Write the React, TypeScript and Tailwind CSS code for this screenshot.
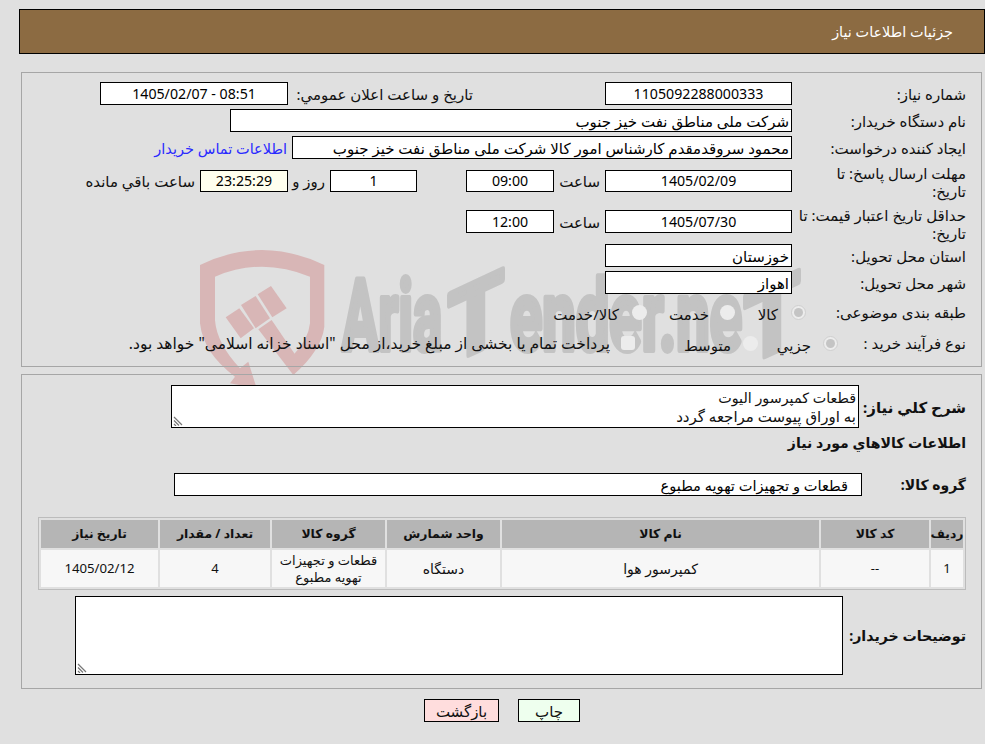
import React from "react";

const Field = ({ w, h = "h-[23px]", center, num, bg = "bg-white", pr = "pr-[2px]", size = "", children }: { w: string; h?: string; center?: boolean; num?: boolean; bg?: string; pr?: string; size?: string; children?: React.ReactNode }) => (
  <div className={`${w} ${h} ${bg} ${center ? "justify-center" : pr} ${num ? "text-[14.2px]" : size} flex shrink-0 items-center whitespace-nowrap border border-black text-black`}>{children}</div>
);

const Radio = ({ on }: { on?: boolean }) => (
  <span className={`flex h-[15px] w-[15px] shrink-0 items-center justify-center rounded-full ${on ? "border border-[#cfcfcf] bg-[#ececec]" : "bg-[#ececec]"}`}>
    {on && <span className="h-[9px] w-[9px] rounded-full bg-[#c4c4c4]" />}
  </span>
);

const Opt = ({ w, gap, on, label }: { w: string; gap: string; on?: boolean; label: string }) => (
  <div className={`${w} flex shrink-0 items-center`}>
    <Radio on={on} />
    <span className={`${gap} mt-[3px] whitespace-nowrap`}>{label}</span>
  </div>
);

const Watermark = () => (
  <svg className="absolute left-[190px] top-[240px] [direction:ltr]" width="640" height="150" viewBox="190 240 640 150">
    <g transform="translate(190 240) scale(0.3333)" fill="#d8b6b6">
      <path d="M30 75 Q215 -15 403 75 L403 260 Q395 330 310 405 L310 345 Q355 300 360 250 L360 110 Q215 50 75 110 L75 240 Q80 310 150 385 L175 365 L200 445 L120 430 L135 410 Q40 340 30 250 Z" />
      <polygon points="107,232 148,205 192,265 152,295" />
      <polygon points="153,195 197,168 240,235 197,265" />
      <polygon points="203,163 243,138 290,205 247,232" />
      <polygon points="205,268 245,240 330,365 310,405" />
    </g>
    <g fill="#c3c3c3" stroke="#c3c3c3" strokeWidth="6" strokeLinejoin="round" fontFamily="Roboto" fontWeight="700" fontSize="98">
      <text x="342" y="350" textLength="100" lengthAdjust="spacingAndGlyphs">Aria</text>
      <text x="448" y="350" textLength="56" lengthAdjust="spacingAndGlyphs" transform="translate(0 223.5) skewY(-25)">T</text>
      <text x="510" y="350" textLength="232" lengthAdjust="spacingAndGlyphs">ender.ne</text>
      <text x="744" y="350" textLength="56" lengthAdjust="spacingAndGlyphs" transform="translate(0 363) skewY(-25)">T</text>
    </g>
  </svg>
);

const Cell = ({ head, size = "text-[14px]", children }: { head?: boolean; size?: string; children: React.ReactNode }) => (
  <div className={`flex items-center justify-center whitespace-nowrap text-center ${head ? "h-[28px] bg-[#b5b5b5] text-[12.4px] font-bold" : `h-[37px] bg-[#f7f7f7] leading-[17px] ${size}`}`}>{children}</div>
);

const Resize = () => (
  <svg className="absolute bottom-[1px] left-[1px]" width="10" height="10" viewBox="0 0 10 10" stroke="#777" strokeWidth="1.2" fill="none">
    <path d="M1 1 L9 9 M1 4.5 L6 9.5 M1 8 L3 10" />
  </svg>
);

export default function App() {
  return (
    <div dir="rtl" className="relative h-[744px] w-[985px] overflow-hidden bg-[#e0e0e0] pt-[9px] font-['Noto_Sans','DejaVu_Sans',sans-serif] text-[15px] leading-[18px] text-[#111]">
      <Watermark />
      <div className="relative">
        <div className="flex h-[45px] w-[966px] items-center border border-black bg-[#8c6b42] pr-[31px] text-[14.4px] text-white">جزئیات اطلاعات نیاز</div>

        <div className="mr-[3px] mt-[18px] w-[961px] border border-[#a6a6a6] pb-[13px] pr-[15px] pt-[9px]">
          <div className="flex items-center">
            <div className="w-[174px] shrink-0">شماره نیاز:</div>
            <Field w="w-[187px]" center num>1105092288000333</Field>
            <div className="mr-[132px] w-[185px] shrink-0">تاریخ و ساعت اعلان عمومي:</div>
            <Field w="w-[188px]" center num>08:51 - 1405/02/07</Field>
          </div>
          <div className="mt-[4px] flex items-center">
            <div className="w-[174px] shrink-0">نام دستگاه خریدار:</div>
            <Field w="w-[562px]">شرکت ملی مناطق نفت خیز جنوب</Field>
          </div>
          <div className="mt-[4px] flex items-center">
            <div className="w-[174px] shrink-0">ایجاد کننده درخواست:</div>
            <Field w="w-[500px]">محمود سروقدمقدم کارشناس امور کالا شرکت ملی مناطق نفت خیز جنوب</Field>
            <a className="mr-[5px] whitespace-nowrap text-[14.5px] text-[#2a2aff]">اطلاعات تماس خریدار</a>
          </div>
          <div className="mt-[5px] flex h-[38px] items-start">
            <div className="w-[174px] shrink-0">مهلت ارسال پاسخ: تا<br />تاریخ:</div>
            <div className="mt-[6px] flex items-center">
              <Field w="w-[187px]" h="h-[22px]" center num>1405/02/09</Field>
              <div className="w-[51px] shrink-0 pr-[5px]">ساعت</div>
              <Field w="w-[88px]" h="h-[22px]" center num>09:00</Field>
              <div className="w-[49px] shrink-0" />
              <Field w="w-[87px]" h="h-[22px]" center num>1</Field>
              <div className="w-[42px] shrink-0 pr-[5px]">روز و</div>
              <Field w="w-[88px]" h="h-[22px]" center num bg="bg-[#ffffee]">23:25:29</Field>
              <div className="mr-[5px] whitespace-nowrap">ساعت باقي مانده</div>
            </div>
          </div>
          <div className="mt-[4px] flex h-[36px] items-start">
            <div className="w-[174px] shrink-0 whitespace-nowrap">حداقل تاریخ اعتبار قیمت: تا<br />تاریخ:</div>
            <div className="mt-[4px] flex items-center">
              <Field w="w-[187px]" center num>1405/07/30</Field>
              <div className="w-[51px] shrink-0 pr-[5px]">ساعت</div>
              <Field w="w-[88px]" center num>12:00</Field>
            </div>
          </div>
          <div className="mt-[2px] flex items-center">
            <div className="w-[174px] shrink-0">استان محل تحویل:</div>
            <Field w="w-[187px]">خوزستان</Field>
          </div>
          <div className="mt-[4px] flex items-center">
            <div className="w-[174px] shrink-0">شهر محل تحویل:</div>
            <Field w="w-[187px]">اهواز</Field>
          </div>
          <div className="mt-[8px] flex h-[20px] items-center">
            <div className="w-[160px] shrink-0">طبقه بندی موضوعی:</div>
            <Opt w="w-[71px]" gap="mr-[13px]" on label="کالا" />
            <Opt w="w-[88px]" gap="mr-[11px]" label="خدمت" />
            <Opt w="w-[120px]" gap="mr-[13px]" label="کالا/خدمت" />
          </div>
          <div className="mt-[11px] flex h-[20px] items-center">
            <div className="w-[128px] shrink-0">نوع فرآیند خرید :</div>
            <Opt w="w-[80px]" gap="mr-[12px]" on label="جزيي" />
            <Opt w="w-[123px]" gap="mr-[12px]" label="متوسط" />
            <div className="flex items-center">
              <span className="h-[14px] w-[14px] shrink-0 rounded-[3px] bg-[#ececec]" />
              <span className="mr-[11px] whitespace-nowrap text-[15.5px]">پرداخت تمام یا بخشی از مبلغ خرید،از محل "اسناد خزانه اسلامی" خواهد بود.</span>
            </div>
          </div>
        </div>

        <div className="mr-[3px] mt-[7px] w-[961px] border border-[#a6a6a6] pb-[13px] pr-[15px] pt-[10px]">
          <div className="flex items-center">
            <div className="w-[107px] shrink-0 font-bold">شرح کلي نياز:</div>
            <div className="relative h-[43px] w-[688px] border border-black bg-white pr-[2px] pt-[2px] leading-[19px]">
              <div className="text-[14.3px]">قطعات کمپرسور الیوت</div>
              <div>به اوراق پیوست مراجعه گردد</div>
              <Resize />
            </div>
          </div>
          <div className="mt-[6px] h-[20px] text-[14.1px] font-bold">اطلاعات کالاهاي مورد نياز</div>
          <div className="mt-[19px] flex items-center">
            <div className="w-[104px] shrink-0 text-[14px] font-bold">گروه کالا:</div>
            <Field w="w-[688px]" pr="pr-[13px]" size="text-[14.6px]">قطعات و تجهیزات تهویه مطبوع</Field>
          </div>
          <div className="mt-[21px] grid w-[928px] grid-cols-[32px_108px_317px_113px_113px_110px_117px] gap-[2px] border border-[#bcbcbc] p-[2px]">
            {["ردیف", "کد کالا", "نام کالا", "واحد شمارش", "گروه کالا", "تعداد / مقدار", "تاریخ نیاز"].map((t) => (
              <Cell head key={t}>{t}</Cell>
            ))}
            <Cell size="text-[13px]">1</Cell>
            <Cell size="text-[13px]">--</Cell>
            <Cell>کمپرسور هوا</Cell>
            <Cell>دستگاه</Cell>
            <Cell size="text-[13px]">قطعات و تجهیزات<br />تهویه مطبوع</Cell>
            <Cell size="text-[13px]">4</Cell>
            <Cell size="text-[13.2px]">1405/02/12</Cell>
          </div>
          <div className="mt-[6px] flex items-center">
            <div className="w-[123px] shrink-0 whitespace-nowrap text-[14.2px] font-bold">توضیحات خریدار:</div>
            <div className="relative h-[79px] w-[768px] border border-black bg-white">
              <Resize />
            </div>
          </div>
        </div>

        <div dir="ltr" className="mt-[10px] flex justify-center gap-[19px] pl-[19px]">
          <button dir="rtl" className="h-[23px] w-[75px] border border-black bg-[#ffdddd]">بازگشت</button>
          <button dir="rtl" className="h-[23px] w-[62px] border border-black bg-[#eeffee]">چاپ</button>
        </div>
      </div>
    </div>
  );
}
